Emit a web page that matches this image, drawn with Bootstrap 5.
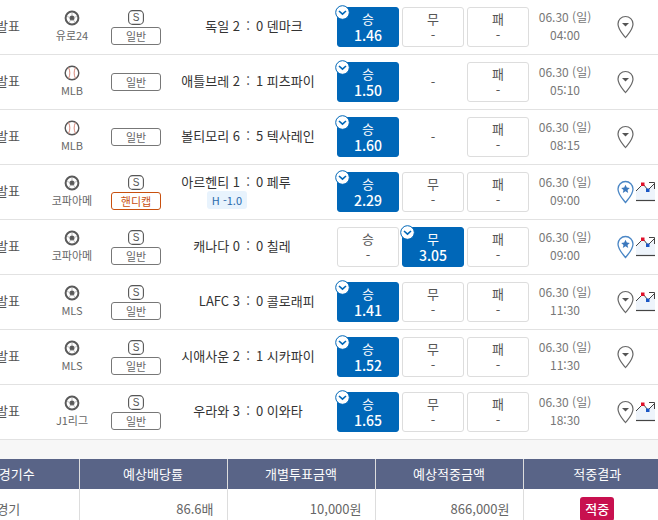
<!DOCTYPE html>
<html lang="ko">
<head>
  <meta charset="UTF-8" />
  <title>투표 내역</title>
  <link href="https://cdn.jsdelivr.net/npm/bootstrap@5.3.3/dist/css/bootstrap.min.css" rel="stylesheet" />
  <style>
    html, body { overflow: hidden; height: 520px; }
    body { font-family: "Noto Sans CJK KR", "Noto Sans", sans-serif; font-size: 13px; color: #444; background: #fff; }
    .hoja { width: 740px; margin-left: -69px; }
    .fila { height: 55px; border-bottom: 1px solid #e2e2e2; display: flex; align-items: center; }
    .c-estado { width: 111px; text-align: right; padding-right: 22px; padding-bottom: 2px; color: #555; }
    .c-liga { width: 60px; text-align: center; color: #666; font-size: 11px; line-height: 14px; padding-bottom: 3px; }
    .c-liga svg { display: block; margin: 0 auto 2px; }
    .c-tipo { width: 68px; display: flex; flex-direction: column; align-items: center; gap: 2px; }
    .tipo-s { display: block; }
    .tipo-caja { width: 50px; height: 18px; border: 1px solid #777; border-radius: 3px; font-size: 11px; line-height: 16px; text-align: center; color: #666; }
    .tipo-caja.hc { border-color: #c8500f; color: #c8500f; }
    .c-partido { width: 156px; display: grid; grid-template-columns: 1fr 16px 1fr; line-height: 18px; color: #333; white-space: nowrap; padding-bottom: 2px; }
    .dos { text-align: center; }
    .local { text-align: right; }
    .chip { grid-column: 1; justify-self: end; margin-right: -7px; background: #e8f3fd; color: #2a69ac; border-radius: 3px; font-size: 11px; line-height: 18px; padding: 0 5px; }
    .c-botones { width: 192px; margin-left: 11px; display: flex; gap: 3px; }
    .apuesta { position: relative; width: 62px; height: 40px; border: 1px solid #ddd; border-radius: 3px; text-align: center; font-size: 13px; line-height: 16px; padding-top: 3px; color: #555; }
    .apuesta.vacia { border-color: transparent; padding-top: 11px; }
    .apuesta.activa { background: #0067b8; border-color: #0067b8; color: #fff; }
    .apuesta.activa b { font-weight: 500; font-size: 14px; }
    .apuesta svg { position: absolute; left: -3px; top: -3px; }
    .c-fecha { width: 72px; text-align: center; color: #777; font-size: 12px; line-height: 18px; padding-bottom: 2px; }
    .c-iconos { margin-left: 16px; display: flex; align-items: center; gap: 2px; }
    .franja { height: 19px; background: #f7f7f7; }
    .resumen { width: 740px; table-layout: fixed; margin: 0; font-size: 13px; }
    .resumen th { background: #596487; color: #fff; font-weight: 400; text-align: center; height: 30px; padding: 0; border: 0; border-left: 1px solid #ddd; vertical-align: middle; }
    .resumen td { height: 40px; padding: 0 13px; border: 0; border-left: 1px solid #ddd; text-align: right; color: #666; vertical-align: middle; }
    .resumen th:first-child, .resumen td:first-child { border-left: 0; }
    .resumen td.centro { text-align: center; }
    .acierto { display: inline-block; background: #c8104f; color: #fff; font-weight: 500; border-radius: 3px; width: 34px; line-height: 24px; text-align: center; }
  </style>
</head>
<body>
  <div class="hoja">
    <div id="filas"></div>
    <div class="franja"></div>
    <table class="table resumen">
      <thead>
        <tr><th>투표경기수</th><th>예상배당률</th><th>개별투표금액</th><th>예상적중금액</th><th>적중결과</th></tr>
      </thead>
      <tbody>
        <tr><td class="centro">8경기</td><td>86.6배</td><td>10,000원</td><td>866,000원</td><td class="centro"><span class="acierto">적중</span></td></tr>
      </tbody>
    </table>
  </div>

  <script>
    const BALON = `<svg width="16" height="16" viewBox="0 0 16 16"><circle cx="8" cy="8" r="6.400" fill="none" stroke="#5a5a5a" stroke-width="2"/><circle cx="8" cy="8" r="2.500" fill="#5a5a5a"/><path d="M8 3v3M3.200 6.500l3 1M12.800 6.500l-3 1M5 12.500l2-3M11 12.500l-2-3" stroke="#aaa" stroke-width=".8"/></svg>`;
    const BEIS = `<svg width="16" height="16" viewBox="0 0 16 16"><circle cx="8" cy="8" r="6.800" fill="none" stroke="#555" stroke-width="1.400"/><path d="M4.500 2.500c1.800 3.400 1.800 7.600 0 11M11.500 2.500c-1.800 3.400-1.800 7.600 0 11" fill="none" stroke="#d98a7c" stroke-width="1"/></svg>`;
    const ESE = `<svg class="tipo-s" width="16" height="15" viewBox="0 0 16 15"><rect x=".6" y=".6" width="14.800" height="13.800" rx="4" fill="none" stroke="#555" stroke-width="1.100"/><text x="8" y="11" text-anchor="middle" font-size="10" font-family="Liberation Sans, sans-serif" fill="#555">S</text></svg>`;
    const CHECK = `<svg width="15" height="15" viewBox="0 0 15 15"><circle cx="7.500" cy="7.500" r="6.800" fill="#fff" stroke="#0067b8" stroke-width="1"/><path d="M4 6l3.500 3.200L11 6" fill="none" stroke="#0067b8" stroke-width="1.600"/></svg>`;
    const PIN_F = `<svg width="17" height="24" viewBox="0 0 17 24"><path d="M8.500 22.500C5 18 1 14.500 1 9a7.500 7.500 0 0 1 15 0c0 5.500-4 9-7.500 13.500z" fill="#fff" stroke="#666" stroke-width="1.200"/><path d="M5 8h7l-3.500 3.500z" fill="#555"/></svg>`;
    const PIN_E = `<svg width="17" height="24" viewBox="0 0 17 24"><path d="M8.500 22.500C5 18 1 14.500 1 9a7.500 7.500 0 0 1 15 0c0 5.500-4 9-7.500 13.500z" fill="#fff" stroke="#4a86c5" stroke-width="1.300"/><path d="M8.500 4.800l1.300 2.800 3 .3-2.300 2 .7 3-2.700-1.600-2.700 1.600.7-3-2.300-2 3-.3z" fill="#3b78bd"/></svg>`;
    const GRAF = `<svg width="19" height="20" viewBox="0 0 19 20"><path d="M0 9l7-7 5 6 7-7v17H0z" fill="#eef4fb"/><path d="M0 9l7-7 5 6 7-7M13 .5h5.500V7" fill="none" stroke="#444" stroke-width="1"/><rect x="5" y=".5" width="3.500" height="3.500" fill="#e0102a"/><rect x="10" y="6.500" width="3.500" height="3.500" fill="#1a56c4"/><path d="M0 18.500h19" stroke="#444" stroke-width="1.200"/></svg>`;

    const partidos = [
      { liga: "유로24", ico: BALON, s: 1, tipo: "일반", l: "독일 2", v: "0 덴마크", sel: 0, c: ["1.46", "-", "-"], h: "04:00", pin: PIN_F },
      { liga: "MLB", ico: BEIS, s: 0, tipo: "일반", l: "애틀브레 2", v: "1 피츠파이", sel: 0, c: ["1.50", null, "-"], h: "05:10", pin: PIN_F },
      { liga: "MLB", ico: BEIS, s: 0, tipo: "일반", l: "볼티모리 6", v: "5 텍사레인", sel: 0, c: ["1.60", null, "-"], h: "08:15", pin: PIN_F },
      { liga: "코파아메", ico: BALON, s: 1, tipo: "핸디캡", hc: 1, l: "아르헨티 1", v: "0 페루", chip: "H -1.0", sel: 0, c: ["2.29", "-", "-"], h: "09:00", pin: PIN_E, graf: 1 },
      { liga: "코파아메", ico: BALON, s: 1, tipo: "일반", l: "캐나다 0", v: "0 칠레", sel: 1, c: ["-", "3.05", "-"], h: "09:00", pin: PIN_E, graf: 1 },
      { liga: "MLS", ico: BALON, s: 1, tipo: "일반", l: "LAFC 3", v: "0 콜로래피", sel: 0, c: ["1.41", "-", "-"], h: "11:30", pin: PIN_F, graf: 1 },
      { liga: "MLS", ico: BALON, s: 1, tipo: "일반", l: "시애사운 2", v: "1 시카파이", sel: 0, c: ["1.52", "-", "-"], h: "11:30", pin: PIN_F },
      { liga: "J1리그", ico: BALON, s: 1, tipo: "일반", l: "우라와 3", v: "0 이와타", sel: 0, c: ["1.65", "-", "-"], h: "18:30", pin: PIN_F, graf: 1 }
    ];
    const NOMBRES = ["승", "무", "패"];

    function boton(p, i) {
      if (p.c[i] === null) return `<div class="apuesta vacia">-</div>`;
      if (p.sel === i) return `<div class="apuesta activa">${CHECK}${NOMBRES[i]}<br><b>${p.c[i]}</b></div>`;
      return `<div class="apuesta">${NOMBRES[i]}<br>${p.c[i]}</div>`;
    }

    document.getElementById("filas").innerHTML = partidos.map(p => `
      <div class="fila">
        <div class="c-estado">결과발표</div>
        <div class="c-liga">${p.ico}${p.liga}</div>
        <div class="c-tipo">${p.s ? ESE : ""}<div class="tipo-caja ${p.hc ? "hc" : ""}">${p.tipo}</div></div>
        <div class="c-partido"><span class="local">${p.l}</span><span class="dos">:</span><span>${p.v}</span>${p.chip ? `<span class="chip">${p.chip}</span>` : ""}</div>
        <div class="c-botones">${[0, 1, 2].map(i => boton(p, i)).join("")}</div>
        <div class="c-fecha">06.30 (일)<br>${p.h}</div>
        <div class="c-iconos">${p.pin}${p.graf ? GRAF : ""}</div>
      </div>`).join("");
  </script>
  <script src="https://cdn.jsdelivr.net/npm/bootstrap@5.3.3/dist/js/bootstrap.bundle.min.js"></script>
</body>
</html>
